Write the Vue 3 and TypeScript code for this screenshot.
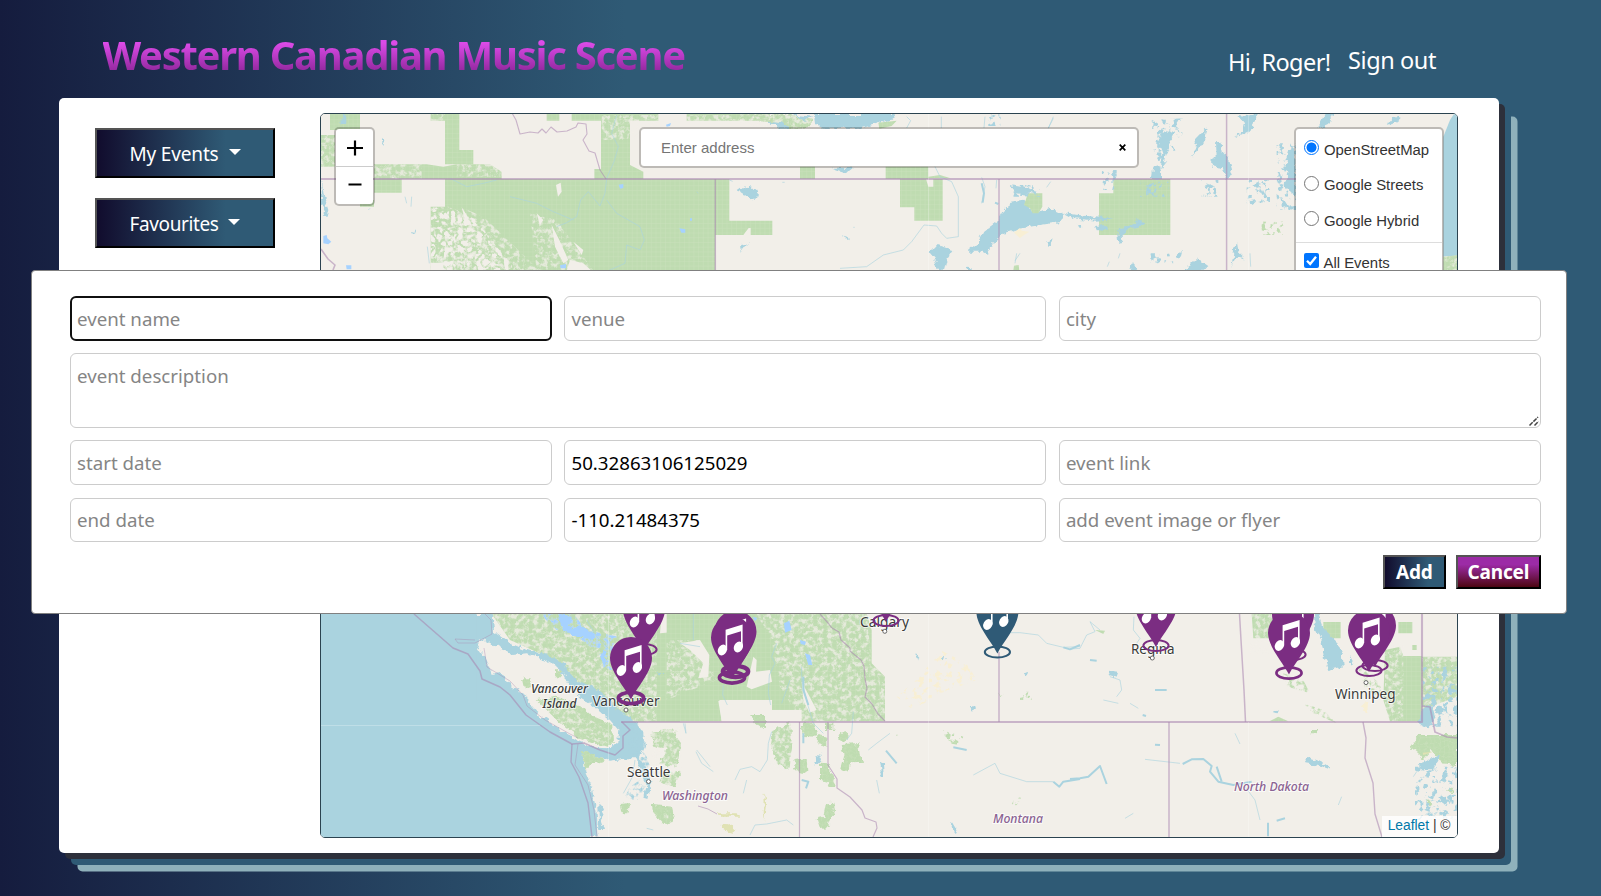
<script setup lang="ts">
import { ref } from 'vue'

type Tone = 'wood' | 'water' | 'sea' | 'land' | 'lake' | 'sand' | 'scrub'
interface Shape { t: Tone; d: string; f?: 'rough' | 'mottle' | 'mottleWide' | 'speck' }
interface Tile { x: number; y: number; shapes: Shape[]; rivers: string[]; thick?: string[] }
interface Pin { x: number; y: number; color: string; ring?: number }
interface Place { text: string; x: number; y: number; w: number; kind: 'city' | 'state' | 'isle' }

const tiles: Tile[] = [
  {
    x: 310, y: 100,
    shapes: [
      { t: 'wood', d: 'M60 40H150V90H60ZM33 105H75V200H33ZM150 300H192V320H150Z' },
      { t: 'land', d: 'M33 95H85V235H33Z', f: 'mottle' },
      { t: 'wood', d: 'M192 193H350L400 200L440 193H540L575 215V237H192ZM192 237H275V278H192Z' },
      { t: 'land', d: 'M192 193H335V237H192ZM440 193H575V230H440Z', f: 'mottle' },
      { t: 'wood', d: 'M405 40H448V150H490V193H405ZM362 40H405V62H362ZM710 40H748V62H710ZM785 40H1045V62H785ZM873 62H960V237H853V207H873ZM960 195L1000 215V237H960ZM1130 40H1380V62H1130Z' },
      { t: 'land', d: 'M875 45H1045V120H875ZM1130 45H1380V62H1130ZM362 40H405V62H362Z', f: 'mottle' },
      { t: 'wood', d: 'M405 237H1216V512H405ZM362 320H405V512H362ZM1216 237H1258V362H1387V405H1216Z' },
      { t: 'land', d: 'M362 320H420L500 360L560 440L620 512H362Z', f: 'mottleWide' },
      { t: 'land', d: 'M450 320L520 350L690 512H360ZM660 340L740 360L850 512H680Z', f: 'mottle' },
      { t: 'land', d: 'M455 322L470 345L480 372L465 360ZM738 255L752 248L755 275L744 290ZM680 340L700 360L690 375ZM725 375L748 420L775 480L760 490L735 440ZM362 488H400V512H362ZM790 425L820 450L815 465ZM1316 384H1322V405H1300ZM780 480L820 490L845 512H770Z' },
      { t: 'lake', d: 'M40 408L50 405L52 415L64 425L55 433L40 430ZM108 496H124V508H110ZM750 496L768 492V505H752ZM926 254L940 252V264L930 266ZM1108 385L1126 388V398H1114ZM1140 355H1146V362H1140ZM1068 74L1083 69L1080 78L1070 80Z' },
      { t: 'water', d: 'M34 237L42 290L55 330L50 350L34 350L45 335L36 300ZM214 108L222 118L225 138L218 135ZM305 396L320 385L315 398ZM1283 275L1302 262L1335 268L1347 292L1325 295L1310 282ZM1290 435L1320 430L1300 445L1292 455ZM96 42H106V70H98Z', f: 'rough' },
    ],
    rivers: ['M890 235L885 280L870 318L835 275L812 300L800 350L770 368L740 380', 'M920 45L905 100L925 140L912 185L890 235', 'M890 300L920 340L990 380L1003 420L990 450L950 435L945 490L895 512', 'M600 290L680 310L730 335L790 360', 'M420 235L470 260L520 250L560 240', 'M352 440L358 490', 'M285 290L290 310M305 290L303 320M180 325L175 330', 'M1258 240L1268 244M1160 275L1165 280'],
  },
  {
    x: 740, y: 100,
    shapes: [
      { t: 'wood', d: 'M0 40L60 50L120 40L220 60L215 85L150 86L90 62L0 60Z', f: 'rough' },
      { t: 'land', d: 'M0 40H220V86H0Z', f: 'mottle' },
      { t: 'water', d: 'M225 42H468L455 60L420 68L360 86H245L228 68ZM90 62L130 68L150 86H120ZM160 44L220 50L190 60Z', f: 'rough' },
      { t: 'wood', d: 'M415 68L470 62L455 78L418 86ZM180 200H225V237H180ZM437 200H565V237H437ZM480 237H608V362H523V322H480ZM565 230L600 225L632 235H565Z' },
      { t: 'land', d: 'M558 237H580V260H565Z' },
      { t: 'wood', d: 'M1120 237H1291V405H1077V280H1120ZM822 497L836 495L838 512H820Z' },
      { t: 'water', d: 'M680 455L712 430L730 395L770 365L790 330L815 308L850 302L862 320L880 335L930 325L968 342L968 365L900 375L845 385L790 402L765 425L742 465L725 455Z', f: 'rough' },
      { t: 'wood', d: 'M864 280H907V320L895 340L878 340L870 325L852 315Z' },
      { t: 'water', d: 'M968 338L1010 345L1070 352L1120 358L1070 362L1000 355ZM810 255L850 262L890 272L870 285L830 280ZM568 460L590 435L640 450L620 480L612 512H595L585 480ZM275 203H340L320 218ZM0 275L30 262L58 292L30 295ZM915 425L938 418L925 438ZM305 402L330 410L328 418ZM1065 378L1100 375L1100 393L1070 390ZM1010 372L1030 376L1020 385ZM1305 470L1325 455L1322 478ZM1168 512L1180 490L1190 512ZM680 500L695 502V512H680Z', f: 'rough' },
      { t: 'water', d: 'M1135 405L1145 385L1180 370L1192 358L1212 368L1195 380L1165 385L1142 410L1148 430L1138 435ZM1235 237L1240 200L1258 195L1268 237Z', f: 'rough' },
      { t: 'water', d: 'M1235 60L1330 55L1325 130L1265 205L1240 150ZM1085 210H1130V270H1090ZM745 42H782V78H745ZM1200 245H1285V290H1200ZM820 255H900V290H820Z', f: 'speck' },
      { t: 'water', d: 'M1270 90L1290 100L1310 90L1290 125L1275 180L1260 210L1270 160L1255 120Z', f: 'rough' },
      { t: 'sand', d: 'M822 398L840 384L845 392L868 395L852 405L840 414Z' },
    ],
    rivers: ['M500 50L512 62L500 84M604 50V84M735 50L732 84M940 55L925 84', 'M585 200L600 230L635 245L655 290L655 410L620 415L605 400L590 378L552 375L515 425L490 450L430 465L380 500L300 505', 'M725 232L735 260L725 310M770 240L768 265', 'M840 460L825 482M1108 485L1102 500M1140 460L1135 475M932 245L920 262', 'M127 247H134M340 382H344'],
    thick: ['M725 250L732 280L728 308M765 308L775 312'],
  },
  {
    x: 1000, y: 100,
    shapes: [
      { t: 'water', d: 'M625 78L615 115L595 150L578 170L590 140L580 125L605 100ZM648 130L665 128L668 158L685 180L695 215L680 240L672 205L640 200L628 180L650 170ZM715 45L760 50L782 42L755 75L765 85L740 98L705 112L730 92L735 70ZM545 512L570 495L590 475L610 490L625 500L615 512ZM385 512L400 492L410 512ZM700 460L708 420L712 455L732 475L712 470L695 500ZM530 460L548 455L545 478Z', f: 'rough' },
      { t: 'water', d: 'M830 130H888V330H830ZM740 240H810V310H740ZM605 240H655V290H605ZM450 460H520V490H450Z', f: 'speck' },
      { t: 'water', d: 'M870 130L886 160V290L850 260L865 230L858 200ZM845 305L870 315L850 325ZM745 300L770 298L758 312ZM790 245L800 250L795 265ZM975 42L1000 42L990 70L955 85ZM1180 50L1200 60L1160 75Z', f: 'rough' },
      { t: 'wood', d: 'M785 365H850V405H785Z', f: 'speck' },
      { t: 'sea', d: 'M1350 60L1362 42H1376V466L1330 470V110Z' },
      { t: 'wood', d: 'M1330 470L1376 465V512H1330Z' },
      { t: 'land', d: 'M1330 470L1376 465V512H1330Z', f: 'mottle' },
    ],
    rivers: ['M750 460L752 500M160 50L145 85M50 460L45 490'],
  },
  {
    x: 310, y: 600,
    shapes: [
      { t: 'wood', d: 'M545 42H1110V365H945L880 310L780 240L700 165L600 120Z' },
      { t: 'land', d: 'M545 42H1040V365H945L880 310L780 240L700 165L600 120Z', f: 'mottle' },
      { t: 'lake', d: 'M690 42H790L830 90L925 110L900 150L840 140L790 100L740 90ZM880 140H910V210H880Z', f: 'mottle' },
      { t: 'lake', d: 'M745 45L785 50L780 85L810 80L850 100L845 120L800 105L760 95ZM875 150L890 160L885 205L875 180Z', f: 'rough' },
      { t: 'land', d: 'M1055 42H1100V95L1050 100Z' },
      { t: 'sea', d: 'M31 42H548L552 95L600 130L650 150L720 165L765 195L785 235L850 265L890 290L920 325L950 345L975 365L1000 400L1005 440L990 475L955 475L900 482L818 452L820 500L845 560L860 640L866 712H31Z', f: 'rough' },
      { t: 'sea', d: 'M31 42H500V712H31ZM500 300H760V712H500Z' },
      { t: 'land', d: 'M497 130L525 117L565 140L605 165L650 160L700 180L750 205L765 235L810 290L850 320L900 360L925 390L922 425L900 445L855 443L800 420L740 380L690 345L655 305L655 290L600 255L570 215L545 222L530 180Z', f: 'rough' },
      { t: 'wood', d: 'M680 300L740 290L800 310L850 350L910 375L912 425L890 440L810 415L740 360ZM638 235H662V262L645 265ZM735 208H756V232H735Z', f: 'rough' },
      { t: 'land', d: 'M690 300L740 300L910 400L890 440L740 365Z', f: 'mottle' },
      { t: 'sea', d: 'M770 210L800 240L850 262L860 310L830 310L800 265Z', f: 'rough' },
      { t: 'wood', d: 'M815 450L880 475L885 485L840 495L825 512ZM1020 400L1090 385L1110 430L1100 500L1050 490L1070 450L1030 440ZM1060 520L1110 515L1095 560L1050 550ZM930 615L960 612L955 640L935 640ZM1025 615L1090 620L1095 665L1060 672L1030 640Z', f: 'rough' },
      { t: 'land', d: 'M1000 380H1115V560H1000ZM1060 635L1075 630V655H1060Z', f: 'mottle' },
      { t: 'water', d: 'M955 375L985 370L1000 400L990 440L1010 470L1020 500L1000 520L985 480L955 450ZM945 590L960 560L990 540L1005 560L985 600L970 600Z', f: 'mottle' },
      { t: 'water', d: 'M985 440L995 480L1015 510L1025 550L1015 595L1000 590L1010 560L985 500ZM865 615L885 625L872 650L885 690H868ZM1040 215L1060 220L1052 230Z', f: 'rough' },
    ],
    rivers: ['M1120 370L1128 400M1160 450L1200 500', 'M975 480L968 530L940 580M1010 685L1030 690', 'M740 180L700 175', 'M830 60L860 110L900 150', 'M1090 120L1160 140L1180 170'],
    thick: [],
  },
  {
    x: 680, y: 600,
    shapes: [
      { t: 'wood', d: 'M-40 42H560L575 90V190L615 230V364H365V330H276V300H118L125 364H-40Z' },
      { t: 'land', d: 'M230 42H560L575 190L615 230V364H365L300 260L276 130ZM-40 120L60 120L110 240L-40 300Z', f: 'mottle' },
      { t: 'land', d: 'M0 130L60 120L88 165L85 230L55 235L70 190L30 150ZM115 303H276V330H360V350L310 345L205 345L210 364H125ZM365 245L410 330L388 338L370 300ZM200 260L220 170L230 180L228 215L270 210L276 245L215 268Z' },
      { t: 'wood', d: 'M207 345L255 345V390L235 375ZM280 390L330 370L335 420L325 510L290 490L270 430ZM340 480L380 475L382 510L362 525L345 510ZM365 368H400L410 410L368 408ZM415 405L442 410V440L412 430ZM435 368H460V390H435ZM480 400L505 395L498 425L475 420ZM485 435L535 432L540 470L558 488L510 490L505 512L482 512L495 470ZM420 488L445 490L470 565L445 560L440 545L420 540ZM410 655L430 650L438 610L460 608L465 630L445 682L420 684Z', f: 'rough' },
      { t: 'land', d: 'M270 370H340V515H270Z', f: 'mottle' },
      { t: 'sand', d: 'M650 290L720 230L780 150L860 190L890 240L780 280L700 330Z', f: 'speck' },
      { t: 'scrub', d: 'M108 640L170 640L175 650L110 650ZM122 668L145 670L170 690L165 700L125 690ZM250 580L258 610L252 665Z', f: 'rough' },
      { t: 'wood', d: 'M990 620L1005 595L1030 590L1010 615ZM790 390L850 410L840 435L800 430ZM630 400L655 405L635 412ZM955 278L970 282L960 292ZM1020 275H1055V300H1020Z', f: 'speck' },
      { t: 'lake', d: 'M312 70L328 62L335 90L315 98ZM218 50L232 54L225 64ZM360 120L378 125L375 135L362 132ZM375 160L390 165L397 195L385 195Z' },
      { t: 'water', d: 'M600 485L612 490L614 528L598 528L605 515ZM405 462L428 465L420 485L403 500L410 475ZM815 665L830 690L828 700L812 680ZM785 170L798 168L795 182ZM1028 220L1045 216L1038 230ZM868 315L885 320L878 335ZM708 160L718 170L714 182Z', f: 'rough' },
    ],
    rivers: ['M15 370L18 400M48 455L65 490L100 515', 'M165 540L180 508L215 500L240 515L262 480L265 430L275 395', 'M130 255L128 285L142 315', 'M290 130L275 170L285 190L268 225L265 280L272 315', 'M365 200V240L385 320L400 370L430 400', 'M500 420L515 400L520 335', 'M980 98L1020 98L1075 105L1100 130L1150 142L1200 140', 'M210 705L225 675L260 672L320 660L340 675', 'M880 525L945 490L960 520L1040 545L1120 545', 'M40 42V120M0 130L60 140', 'M590 540L598 580M565 450L590 430L630 400', 'M330 240L305 310M200 540L190 580'],
    thick: ['M370 230V270L385 315', 'M1120 545L1138 560L1150 545L1200 537', 'M618 452L650 490M820 442L860 450', 'M370 400V430M365 540L385 545L378 565', 'M1150 142L1170 148L1200 135'],
  },
  {
    x: 1070, y: 600,
    shapes: [
      { t: 'wood', d: 'M545 42H700V160L620 140L600 115L550 115ZM945 150L990 140L1000 168H1055V364H960L940 300ZM985 66H1027V100H985ZM760 66H812V115H760ZM1027 135H1040V150H1027ZM1055 170H1161V290L1055 330ZM598 364L625 350L655 364ZM75 90L105 92L100 102Z' },
      { t: 'land', d: 'M540 42H700V160H540ZM945 130H1000V364H945ZM1055 170H1161V330H1055Z', f: 'mottle' },
      { t: 'wood', d: 'M640 220L700 240L720 280L650 260ZM700 310L760 330L800 370L730 340ZM860 190L950 270L930 300L880 260Z', f: 'mottle' },
      { t: 'wood', d: 'M1020 440L1045 405L1161 405V495L1110 490L1085 450L1060 480L1045 460ZM1075 600L1090 605L1082 618ZM1130 570L1150 565L1145 580ZM720 390H740V400H720Z', f: 'rough' },
      { t: 'scrub', d: 'M1058 458L1090 455L1060 465Z' },
      { t: 'water', d: 'M732 42H745L762 90L800 125L815 160L818 200L775 210L762 175L755 125L735 85ZM840 165L848 180L840 198ZM1045 345L1080 310L1095 360L1075 382L1045 375ZM1048 490L1110 468L1100 488L1085 508L1048 508ZM115 212L145 215L140 230L120 225ZM708 470L740 480L770 495L785 510L745 495L712 490ZM1105 595L1130 590L1140 605L1118 612ZM605 335L625 328L620 340Z', f: 'rough' },
      { t: 'water', d: 'M1058 200H1161V380H1058ZM1035 500H1161V660H1035Z', f: 'speck' },
      { t: 'sea', d: 'M1105 318L1125 325L1110 345L1090 335ZM1155 290L1161 280V310Z', f: 'rough' },
      { t: 'sand', d: 'M885 300L895 310L888 340L875 320Z', f: 'rough' },
    ],
    rivers: ['M0 147L30 145L50 105L75 95L60 65L90 90', 'M192 50L190 90L210 115L200 130', 'M225 478L330 490', 'M120 230L150 240L155 270L140 290M100 300L145 310M180 310L205 325', 'M525 560L555 600L570 660', 'M495 400L510 432M165 655L190 640', 'M815 590L805 615', 'M1040 515L1030 530'],
    thick: ['M0 537L30 535L55 530L90 498L110 552', 'M338 492L365 478L400 477L425 498L420 515L445 545L490 555L545 545', 'M440 500L455 545', 'M594 668V709M620 662L645 655', 'M255 434L270 435M60 180L80 182M255 270H290M218 345L228 348'],
  },
]

const borders: { d: string; w: number }[] = [
  { d: 'M321 179H1424', w: 1.8 },
  { d: 'M715.3 179V270M999 179V270M1226.6 113V270', w: 1.5 },
  { d: 'M512 113L516 120L520 134L530 132L538 133L542 129L546 133L551 127L557 132L567 131L576 127L578 123L586 124L587 134L583 140L589 151L595 153L600 170L606 179', w: 1.1 },
  { d: 'M321 249L328 259L335 265L333 270', w: 1.6 },
  { d: 'M621 722L683 722H1422V613', w: 2.1 },
  { d: 'M799.5 722V837M828 722V765L837 779L837 788L850 797L862 810L865 818L876 822L877 828L873 837', w: 1.2 },
  { d: 'M820 614L828 623L832 628L839 632L841 640L850 648L850 651L861 660L864 666L865 679L867 688L865 697L872 704L878 714L885 721', w: 1.2 },
  { d: 'M999 652V722M1239.5 614L1241 640L1244 690L1245.5 722M1169 722V837', w: 1.5 },
  { d: 'M1363 722L1366 738L1365 758L1373 783L1375 814L1382 837', w: 1.4 },
  { d: 'M1422 706L1430 707L1435 732L1447 737L1458 738', w: 1.7 },
  { d: 'M414 614L453 648L468 654L480 671L482 679L500 687L510 695L526 715L550 732L572 744L584 743L600 750L615 755L623 748L623 736L630 730L622 722', w: 1.5 },
  { d: 'M572 744L571 762L579 777L588 803L592 837', w: 1.4 },
  { d: 'M485 614L491 620L492 634L475 643L458 643L455 639L475 640M484 648L487 667L510 681L523 695L527 706L545 720L570 734L578 738M578 744L575 765L588 785L594 810L597 837', w: .7 },
  { d: 'M698 806L708 809L717 814', w: 1 },
]

const purple = '#7b2d82'
const pins: Pin[] = [
  { x: 644, y: 650, color: purple },
  { x: 886, y: 621, color: purple },
  { x: 1156, y: 646, color: purple },
  { x: 1293, y: 655, color: purple },
  { x: 997.4, y: 652.5, color: '#2f5a76' },
  { x: 1375, y: 666, color: purple },
  { x: 1369, y: 671, color: purple },
  { x: 735.5, y: 672, color: purple, ring: 4.5 },
  { x: 732, y: 678, color: purple, ring: 3.6 },
  { x: 1289, y: 673.5, color: purple, ring: 2.6 },
  { x: 631, y: 698.5, color: purple, ring: 3.8 },
]

const places: Place[] = [
  { text: 'Vancouver', x: 531, y: 692.5, w: 57, kind: 'isle' },
  { text: 'Island', x: 542.5, y: 707.5, w: 34, kind: 'isle' },
  { text: 'Vancouver', x: 592.5, y: 706, w: 67, kind: 'city' },
  { text: 'Calgary', x: 860, y: 626.5, w: 49, kind: 'city' },
  { text: 'Regina', x: 1131, y: 653.5, w: 43.5, kind: 'city' },
  { text: 'Winnipeg', x: 1335, y: 698.5, w: 60.5, kind: 'city' },
  { text: 'Seattle', x: 627, y: 777, w: 43.5, kind: 'city' },
  { text: 'Washington', x: 662, y: 799.5, w: 66, kind: 'state' },
  { text: 'Montana', x: 993, y: 823, w: 50, kind: 'state' },
  { text: 'North Dakota', x: 1234, y: 791, w: 75, kind: 'state' },
]
const dots: [number, number][] = [[626, 710], [884.8, 631.3], [1152.3, 658], [1366, 682.6], [648.5, 781.5]]

const layer = ref('OpenStreetMap')
const layers = ['OpenStreetMap', 'Google Streets', 'Google Hybrid']
const lat = ref('50.32863106125029')
const lng = ref('-110.21484375')
</script>

<template>
  <div class="page">
    <header class="top">
      <h1>Western Canadian Music Scene</h1>
      <nav><span class="hi">Hi, Roger!</span><a class="out">Sign out</a></nav>
    </header>

    <main class="panel">
      <aside class="side">
        <button class="drop">My Events<i class="caret"></i></button>
        <button class="drop">Favourites<i class="caret"></i></button>
      </aside>

      <section class="map">
        <svg class="canvas" viewBox="321 114 1136 723" width="1136" height="723">
          <defs>
            <pattern id="grid" width="14.2" height="14.2" patternUnits="userSpaceOnUse">
              <rect width="14.2" height="14.2" fill="#bfdcb1" /><path d="M0 0H14.2M0 0V14.2" stroke="#cbe1be" stroke-width="2.4" />
            </pattern>
            <filter id="rough" x="-10%" y="-10%" width="120%" height="120%">
              <feTurbulence type="fractalNoise" baseFrequency=".05" numOctaves="3" seed="4" />
              <feDisplacementMap in="SourceGraphic" scale="22" xChannelSelector="R" yChannelSelector="G" />
            </filter>
            <filter id="mottle" x="0" y="0" width="100%" height="100%" color-interpolation-filters="sRGB">
              <feTurbulence type="fractalNoise" baseFrequency=".07" numOctaves="4" seed="8" />
              <feColorMatrix values="0 0 0 0 0  0 0 0 0 0  0 0 0 0 0  4 0 0 0 -1.8" />
              <feComposite in="SourceGraphic" operator="in" />
            </filter>
            <filter id="mottleWide" x="0" y="0" width="100%" height="100%" color-interpolation-filters="sRGB">
              <feTurbulence type="turbulence" baseFrequency=".05" numOctaves="2" seed="3" />
              <feColorMatrix values="0 0 0 0 0  0 0 0 0 0  0 0 0 0 0  5 0 0 0 -.9" />
              <feComposite in="SourceGraphic" operator="in" />
            </filter>
            <filter id="speck" x="0" y="0" width="100%" height="100%" color-interpolation-filters="sRGB">
              <feTurbulence type="fractalNoise" baseFrequency=".06" numOctaves="3" seed="12" />
              <feColorMatrix values="0 0 0 0 0  0 0 0 0 0  0 0 0 0 0  9 0 0 0 -4.9" />
              <feComposite in="SourceGraphic" operator="in" />
            </filter>
          </defs>
          <rect x="320" y="113" width="1140" height="726" fill="#f2efe9" />
          <g v-for="t in tiles" :key="t.x + '-' + t.y" :transform="`translate(${t.x} ${t.y}) scale(.33333)`">
            <path v-for="(s, i) in t.shapes" :key="i" :d="s.d" :class="[s.t, { faint: s.t === 'land' && s.f === 'mottle' }]" :filter="s.f ? `url(#${s.f})` : undefined" />
            <path v-for="r in t.rivers" :key="r" :d="r" class="river" />
            <path v-for="r in t.thick" :key="r" :d="r" class="river thick" />
          </g>
          <path v-for="b in borders" :key="b.d" :d="b.d" class="border" :stroke-width="b.w" />
          <path class="seam" d="M608.5 614V837M928.5 113V270M928.5 614V837M1248.5 113V270M1248.5 722V837M321 725.5H540" />
          <text v-for="p in places" :key="p.text + p.y" :x="p.x" :y="p.y" :textLength="p.w" lengthAdjust="spacingAndGlyphs" class="place" :class="p.kind">{{ p.text }}</text>
          <circle v-for="d in dots" :key="d[0]" :cx="d[0]" :cy="d[1]" r="2" class="dot" />
          <g v-for="p in pins" :key="p.x" :transform="`translate(${p.x} ${p.y})`">
            <ellipse cy="-.5" rx="12.6" ry="5.6" fill="none" :stroke="p.color" :stroke-width="p.ring ?? 2" />
            <path d="M0 1C-6-11-21-27-21-40.500A21 21 0 0 1 21-40.500C21-27 6-11 0 1Z" :fill="p.color" />
            <path class="note" d="M-6.4-48.3L10.600-53.600V-31H9V-46.800L-4.800-42.400V-28H-6.400Z" />
            <ellipse class="note" cx="-9.6" cy="-28" rx="4.4" ry="5.6" transform="rotate(28 -9.6 -28)" />
            <ellipse class="note" cx="6.4" cy="-31" rx="4.4" ry="5.6" transform="rotate(28 6.4 -31)" />
          </g>
        </svg>

        <div class="zoom">
          <button><svg width="16" height="16"><path d="M0 8H16M8 .5V15.500" /></svg></button>
          <button><svg width="14" height="16"><path d="M0.500 6.500H13.500" /></svg></button>
        </div>
        <div class="search"><span>Enter address</span><svg width="7" height="7"><path d="M.7.7L6.300 6.300M6.300.7L.7 6.300" /></svg></div>
        <div class="layers">
          <label v-for="l in layers" :key="l"><i class="radio" :class="{ on: l === layer }"></i>{{ l }}</label>
          <hr />
          <label class="all"><svg class="check" width="15" height="15"><path d="M3 7.800L6.200 11L12 3.800" /></svg>All Events</label>
        </div>
        <div class="credit"><a>Leaflet</a> | ©</div>
      </section>
    </main>

    <form class="modal" @submit.prevent>
      <input class="focus" placeholder="event name" />
      <input placeholder="venue" />
      <input placeholder="city" />
      <div class="area">
        <textarea placeholder="event description"></textarea>
        <svg class="grip" width="12" height="12"><path d="M1.500 10.500L10 2M6.500 10.500L10.500 6.500" /></svg>
      </div>
      <input placeholder="start date" />
      <input v-model="lat" />
      <input placeholder="event link" />
      <input placeholder="end date" />
      <input v-model="lng" />
      <input placeholder="add event image or flyer" />
      <div class="actions">
        <button class="add">Add</button>
        <button class="cancel">Cancel</button>
      </div>
    </form>
  </div>
</template>

<style>
html, body { margin: 0; overflow: hidden; }
</style>

<style scoped>
* { box-sizing: border-box; }
.page {
  position: relative; width: 100%; height: 896px; overflow: hidden;
  font-family: "Segoe UI", "Noto Sans", "Open Sans", sans-serif;
  background: linear-gradient(to right, #151c3e 0, #2f5a75 625px);
}
.top { height: 98px; padding: 0 165px 0 102.500px; display: flex; justify-content: space-between; align-items: flex-start; }
h1 {
  margin: 25px 0 0; height: 60px; line-height: 60px; font-size: 40px; font-weight: 700; white-space: nowrap; letter-spacing: -1.270px;
  background: linear-gradient(to bottom, #dc4be8 30%, #962aa2 75%);
  -webkit-background-clip: text; background-clip: text; color: transparent;
}
nav { display: flex; color: #fff; font-size: 23.500px; line-height: 32px; white-space: nowrap; letter-spacing: -.4px; }
.hi { margin-top: 45.500px; width: 120px; margin-left: -1px; letter-spacing: -.6px; }
.out { margin-top: 44px; width: 88px; }

.panel {
  margin-left: 59px; width: 1440px; height: 755px; background: #fff; border-radius: 5px; display: flex;
  box-shadow: 6px 6px #2d303b, 12px 12px #2f5a75, 18.500px 18.500px #8fb1bb;
}
.side { width: 261px; padding: 30px 0 0 36px; display: flex; flex-direction: column; gap: 20px; }
.drop {
  width: 180px; height: 50px; padding: 2px 0 0; border: 2px outset #000; color: #fff; letter-spacing: -.15px;
  font: 19px "Segoe UI", "Noto Sans", sans-serif; display: flex; align-items: center; justify-content: center; gap: 10px;
  background: linear-gradient(to right, #110c2d, #2f5a75 73%);
}
.drop + .drop { letter-spacing: -.4px; }
.caret { border: 6px solid transparent; border-top-color: #fff; border-bottom: 0; margin-top: -4px; }

.map { position: relative; width: 1138px; height: 725px; margin-top: 15px; border: 1px solid #2b4350; border-radius: 5px; overflow: hidden; font-family: "Liberation Sans", Arial, sans-serif; }
.canvas { display: block; }
.wood { fill: url(#grid); }
.water, .sea { fill: #aad3df; }
.land { fill: #f2efe9; }
.faint { opacity: .75; }
.lake { fill: #a6d2ff; }
.sand { fill: #f8efd4; }
.scrub { fill: #e0e2b4; }
.river { fill: none; stroke: #aad3df; stroke-width: 2.500; stroke-linejoin: round; opacity: .75; }
.thick { stroke-width: 6; opacity: 1; }
.border { fill: none; stroke: #a884ae; opacity: .55; stroke-linejoin: round; }
.seam { stroke: #fff; stroke-width: 1; opacity: .25; fill: none; }
.place { font-family: "Noto Sans", sans-serif; font-size: 14px; fill: #3a3a3a; stroke: rgba(255, 255, 255, .7); stroke-width: 2px; paint-order: stroke; }
.isle { font-size: 12.800px; font-style: italic; font-weight: 500; }
.state { font-size: 12.500px; font-style: italic; font-weight: 500; fill: #8b6392; }
.dot { fill: #fff; stroke: #666; stroke-width: 1; }
.note { fill: #fff; }

.zoom, .search, .layers { position: absolute; background: #fff; background-clip: padding-box; border: 2px solid rgba(0, 0, 0, .22); border-radius: 5px; }
.zoom { left: 13px; top: 13px; width: 41px; height: 79px; display: flex; flex-direction: column; }
.zoom button { flex: 1; padding: 0; border: 0; background: none; display: flex; align-items: center; justify-content: center; }
.zoom button + button { border-top: 1px solid #ccc; }
.zoom svg path { stroke: #000; stroke-width: 2.200; }
.search { left: 318px; top: 13px; width: 500px; height: 41px; padding: 0 11px 0 20px; display: flex; align-items: center; justify-content: space-between; color: #757575; font-size: 15px; }
.search svg path { stroke: #000; stroke-width: 1.700; }
.layers { right: 13px; top: 13px; width: 150px; height: 300px; padding: 2px 0 0; color: #333; font-size: 14.900px; }
.layers label { height: 35.500px; padding: 2px 0 0 7.500px; display: flex; align-items: center; gap: 5.500px; white-space: nowrap; line-height: 20px; }
.radio { width: 15px; height: 15px; border: 1px solid #767676; border-radius: 50%; margin-top: -4px; flex: none; }
.radio.on { border: 1.500px solid #0075ff; background: radial-gradient(#0075ff 4.700px, #fff 5.300px); }
.layers hr { margin: 4px 0 0; border: 0; border-top: 1px solid #ddd; }
.layers .all { gap: 5px; padding-top: 5px; }
.check { background: #0075ff; border-radius: 2px; margin-top: -4px; }
.check path { fill: none; stroke: #fff; stroke-width: 2.300; }
.credit { position: absolute; right: 0; bottom: 0; height: 21px; padding: 0 6.500px 0 6px; line-height: 20px; font-size: 13.800px; color: #333; background: rgba(255, 255, 255, .8); white-space: nowrap; }
.credit a { color: #0078a8; }

.modal {
  position: absolute; left: 31px; top: 270px; width: 1536px; height: 344px; padding: 25.300px 25px 0 38px;
  background: #fff; border: 1px solid #808080; border-radius: 4px;
  display: grid; grid-template-columns: repeat(3, 482px); grid-template-rows: 44.600px 74.600px 44.600px 44.600px 34px; gap: 12.500px 12.450px; align-content: start;
}
input, textarea {
  display: block; width: 100%; height: 100%; margin: 0; padding: 0 6px; border: 1px solid #ccc; border-radius: 6px; outline: 0;
  font: 18.700px "Segoe UI", "Noto Sans", "Open Sans", sans-serif; color: #000; background: #fff;
}
.area { position: relative; grid-column: 1 / -1; }
textarea { padding-top: 9px; resize: none; overflow: hidden; }
.grip { position: absolute; right: 1px; bottom: 1px; }
.grip path { stroke: #444; stroke-width: 1.500; stroke-dasharray: 4.500 1; }
::placeholder { color: #858585; opacity: 1; }
.focus { border: 2px solid #101010; padding: 0 5px; }
.actions { grid-column: 1 / -1; display: flex; justify-content: flex-end; gap: 10px; }
.actions button { height: 34px; padding: 0; border: 2px outset #000; color: #fff; font: 700 19px/30px "Segoe UI", "Noto Sans", sans-serif; letter-spacing: -.2px; }
.add { width: 63px; background: linear-gradient(to right, #110c2d, #2f5a75 73%); }
.cancel { width: 85px; background: linear-gradient(to bottom, #9c2ba6 25%, #4e0612); }
</style>
